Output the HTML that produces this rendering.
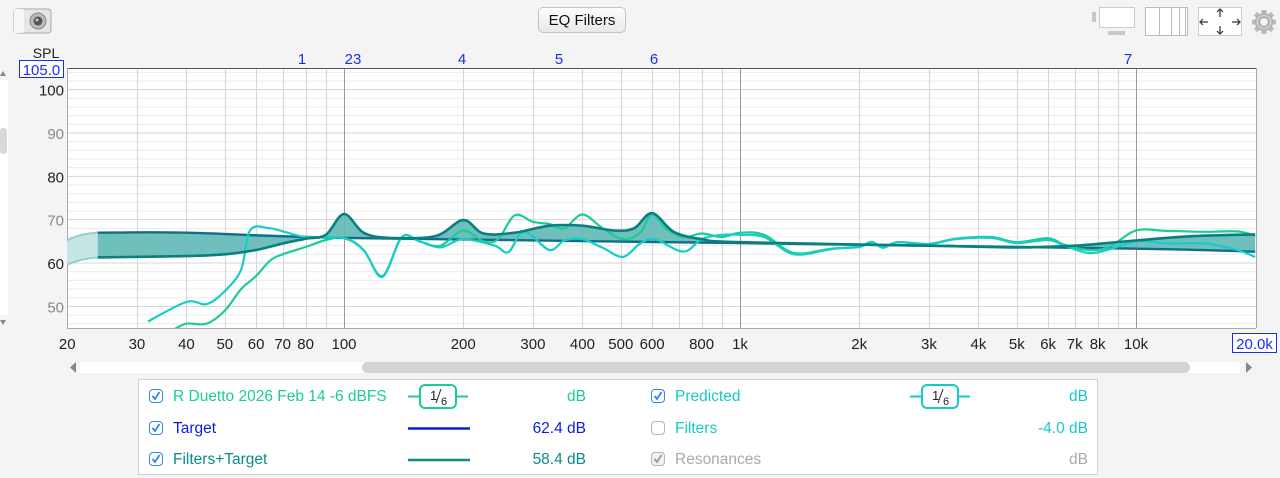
<!DOCTYPE html>
<html><head><meta charset="utf-8">
<style>
html,body{margin:0;padding:0;width:1280px;height:478px;overflow:hidden;background:#f4f4f4;font-family:"Liberation Sans",Arial,sans-serif;}
.abs{position:absolute}
.btn{left:538px;top:7px;width:88px;height:26px;border:1px solid #c4c4c4;border-radius:5px;background:linear-gradient(#fdfdfd,#e9e9e9);font-size:15px;line-height:26px;text-align:center;color:#111;box-sizing:border-box}
.legend{left:138px;top:379px;width:960px;height:96px;background:#fff;border:1px solid #d2d2d2;box-sizing:border-box}
.row{position:absolute;font-size:15.5px;line-height:18px;white-space:nowrap}
.r1{right:511px}.r2{right:9px}
.cb{position:absolute;width:14px;height:14px;border:1.5px solid #2f86f0;border-radius:4px;box-sizing:border-box;background:#fff}
.cb svg{position:absolute;left:1px;top:1px}
.cb.g{border-color:#b5b5b5}
</style></head><body>
<svg class="abs" style="left:0;top:0" width="1280" height="478" id="s">
</svg>
<div class="abs btn">EQ Filters</div>
<div class="abs legend">
 <div class="cb" style="left:10px;top:9px"><svg width="10" height="10"><path d="M1.5 5 L4 8 L8.5 1" stroke="#2f86f0" stroke-width="1.8" fill="none"/></svg></div>
 <div class="row" style="left:34px;top:8px;color:#1bcc98">R Duetto 2026 Feb 14 -6 dBFS</div>
 <div class="row r1" style="top:8px;color:#1bcc98">dB</div>
 <div class="cb" style="left:10px;top:41px"><svg width="10" height="10"><path d="M1.5 5 L4 8 L8.5 1" stroke="#2f86f0" stroke-width="1.8" fill="none"/></svg></div>
 <div class="row" style="left:34px;top:40px;color:#0c1de0">Target</div>
 <div class="row r1" style="top:40px;color:#0c1de0">62.4 dB</div>
 <div class="cb" style="left:10px;top:72px"><svg width="10" height="10"><path d="M1.5 5 L4 8 L8.5 1" stroke="#2f86f0" stroke-width="1.8" fill="none"/></svg></div>
 <div class="row" style="left:34px;top:71px;color:#0b8b86">Filters+Target</div>
 <div class="row r1" style="top:71px;color:#0b8b86">58.4 dB</div>

 <div class="cb" style="left:512px;top:9px"><svg width="10" height="10"><path d="M1.5 5 L4 8 L8.5 1" stroke="#2f86f0" stroke-width="1.8" fill="none"/></svg></div>
 <div class="row" style="left:536px;top:8px;color:#16cbc4">Predicted</div>
 <div class="row r2" style="top:8px;color:#16cbc4">dB</div>
 <div class="cb g" style="left:512px;top:41px"></div>
 <div class="row" style="left:536px;top:40px;color:#16cbc4">Filters</div>
 <div class="row r2" style="top:40px;color:#16cbc4">-4.0 dB</div>
 <div class="cb g" style="left:512px;top:72px;background:#f2f2f2"><svg width="10" height="10"><path d="M1.5 5 L4 8 L8.5 1" stroke="#999" stroke-width="1.8" fill="none"/></svg></div>
 <div class="row" style="left:536px;top:71px;color:#aaa">Resonances</div>
 <div class="row r2" style="top:71px;color:#aaa">dB</div>
</div>
<svg class="abs" style="left:0;top:0" width="1280" height="478" id="s2"></svg>
<script>
const S=document.getElementById('s');let h='';
const X=f=>344+396*Math.log10(f/100), Y=d=>68+(105-d)*4.333;
h+='<rect x="67" y="68" width="1189" height="260" fill="#fff"/>';
for(let d=46;d<=104;d+=2){const c=d%10==0?'#d4d4d4':'#ececec';h+=`<line x1="67" x2="1256" y1="${Y(d)}" y2="${Y(d)}" stroke="${c}"/>`;}
const fr=[20,30,40,50,60,70,80,90,100,200,300,400,500,600,700,800,900,1000,2000,3000,4000,5000,6000,7000,8000,9000,10000];
fr.forEach(f=>{const dec=(f==100||f==1000||f==10000);const x=Math.round(X(f))+.5;h+=`<line x1="${x}" x2="${x}" y1="68" y2="328" stroke="${dec?'#9a9a9a':'#d6d6d6'}"/>`;});
h+='<line x1="67" x2="1256" y1="68.5" y2="68.5" stroke="#555"/><line x1="67.5" x2="67.5" y1="68" y2="328" stroke="#aaa"/><line x1="1256.5" x2="1256.5" y1="68" y2="328" stroke="#aaa"/><line x1="67" x2="1256" y1="328.5" y2="328.5" stroke="#aaa"/>';
function path(pts){const p=pts.map(a=>[X(a[0]),Y(a[1])]);let s=`M${p[0][0].toFixed(1)},${p[0][1].toFixed(1)}`;for(let i=0;i<p.length-1;i++){const p0=p[i-1]||p[i],p1=p[i],p2=p[i+1],p3=p[i+2]||p2;s+=` C${(p1[0]+(p2[0]-p0[0])/6).toFixed(1)},${(p1[1]+(p2[1]-p0[1])/6).toFixed(1)} ${(p2[0]-(p3[0]-p1[0])/6).toFixed(1)},${(p2[1]-(p3[1]-p1[1])/6).toFixed(1)} ${p2[0].toFixed(1)},${p2[1].toFixed(1)}`;}return s;}
const T=[[23.9,67],[40,67],[100,65.8],[1000,64.6],[10000,63.3],[20000,62.6]];
const FT=[[23.9,61.3],[40,61.6],[50,62],[60,63],[70,64.5],[80,65.6],[90,66.5],[100,71.3],[112,67],[130,65.8],[170,66.2],[200,69.9],[225,66.8],[270,67],[330,68.6],[400,68.6],[480,67.5],[540,68],[600,71.5],[680,67.2],[800,65.5],[1000,64.8],[3000,64],[5000,63.6],[7000,64],[10000,65.2],[14000,66.2],[20000,66.6]];
h+=`<path d="M67,${Y(65.2)} Q80,${Y(66.8)} 98,${Y(67)} L98,${Y(61.3)} Q80,${Y(61)} 67,${Y(59.6)}Z" fill="#c6e6e6"/>`;
h+=`<path d="M67,${Y(65.2)} Q80,${Y(66.8)} 98,${Y(67)} M98,${Y(61.3)} Q80,${Y(61)} 67,${Y(59.6)}" stroke="#8fd0d0" stroke-width="2" fill="none"/>`;
const Tr=T.slice().reverse();
h+=`<path d="${path(FT)} L${X(20000)},${Y(62.6)} ${path(Tr).replace('M','L')}Z" fill="#5fb9b6" fill-opacity=".9"/>`;
h+=`<path d="${path(T)}" stroke="#0f6f8a" stroke-width="2.4" fill="none"/>`;
const G=[[37,44.5],[40,46],[45,46],[50,49],[55,54],[60,57],[65,60.5],[70,62],[80,63.7],[90,65.3],[100,65.8],[112,63],[125,57],[140,66],[155,65],[175,64],[200,67.5],[225,65],[245,65.5],[270,71],[300,69.5],[330,69],[360,68],[400,71.2],[450,68],[506,65.5],[560,67],[600,71.3],[650,68],[720,66],[800,66.8],[900,66],[1000,67],[1150,66.5],[1370,62.3],[1700,63.3],[2000,63.7],[2150,64.8],[2300,63.5],[2500,64.8],[3000,64.4],[3500,65.6],[4300,66],[5000,64.8],[6000,65.7],[6600,64.2],[7600,63],[8600,63.8],[10000,67.5],[12000,67.4],[15000,67.2],[18000,67.3],[20000,66.3]];
const P=[[32,46.5],[40,51],[45,50.5],[50,53.5],[55,58.5],[58,67.6],[65,68],[72,67],[80,66],[100,65.7],[112,63],[125,56.8],[140,66],[155,65],[175,63.6],[200,65.5],[240,64],[260,62.5],[285,67.2],[330,63],[360,65.2],[400,65.5],[450,63.5],[506,61.4],[560,64.5],[610,65.5],[719,62.6],[800,65.5],[900,66.5],[1000,66.5],[1150,66],[1370,62],[1700,63.2],[2000,63.8],[2150,64.9],[2300,63.6],[2500,64.8],[3000,64.3],[3500,65.5],[4300,65.8],[5000,64.6],[6000,65.3],[6600,64],[7600,62.3],[8600,63.2],[10000,65],[12000,64.5],[15000,64.5],[18000,63],[20000,61.4]];
h+='<clipPath id="c"><rect x="67" y="68" width="1189" height="260"/></clipPath>';
h+=`<g clip-path="url(#c)"><path d="${path(G)}" stroke="#19cc98" stroke-width="2.2" fill="none"/><path d="${path(P)}" stroke="#18cdc6" stroke-width="2.2" fill="none"/><path d="${path(FT)}" stroke="#0a7f80" stroke-width="2.6" fill="none"/></g>`;
[[100,'#222'],[90,'#888'],[80,'#222'],[70,'#888'],[60,'#222'],[50,'#888']].forEach(a=>{h+=`<text x="64" y="${Y(a[0])+6}" font-size="15" text-anchor="end" fill="${a[1]}">${a[0]}</text>`;});
h+='<text x="46" y="58" font-size="14" text-anchor="middle" fill="#222">SPL</text>';
h+='<rect x="19.5" y="60.5" width="44" height="17" fill="#fff" stroke="#1a2ef0"/><text x="41.5" y="75" font-size="15" text-anchor="middle" fill="#1a2ef0">105.0</text>';
[[20,'20'],[30,'30'],[40,'40'],[50,'50'],[60,'60'],[70,'70'],[80,'80'],[100,'100'],[200,'200'],[300,'300'],[400,'400'],[500,'500'],[600,'600'],[800,'800'],[1000,'1k'],[2000,'2k'],[3000,'3k'],[4000,'4k'],[5000,'5k'],[6000,'6k'],[7000,'7k'],[8000,'8k'],[10000,'10k']].forEach(a=>{h+=`<text x="${X(a[0])}" y="349" font-size="15" text-anchor="middle" fill="#222">${a[1]}</text>`;});
h+='<rect x="1232.5" y="333.5" width="44" height="19" fill="#fff" stroke="#1a2ef0"/><text x="1254.5" y="349" font-size="15" text-anchor="middle" fill="#1a2ef0">20.0k</text>';
[[302,'1'],[353,'23'],[462,'4'],[559,'5'],[654,'6'],[1128,'7']].forEach(a=>{h+=`<text x="${a[0]}" y="64" font-size="15" text-anchor="middle" fill="#1a2ef0">${a[1]}</text>`;});
h+='<rect x="80" y="362" width="1160" height="11" fill="#fff"/><rect x="362" y="362" width="828" height="11" rx="5.5" fill="#d4d4d4"/>';
h+='<path d="M76,362 L70,367.5 L76,373Z" fill="#888"/><path d="M1246,362 L1252,367.5 L1246,373Z" fill="#888"/>';
h+='<rect x="0" y="80" width="8" height="235" fill="#fff"/><rect x="0" y="128" width="7" height="26" rx="3" fill="#d8d8d8"/>';
h+='<path d="M0,76 L3,71 L6,76Z" fill="#888"/><path d="M0,320 L3,325 L6,320Z" fill="#888"/>';
h+='<rect x="14" y="9" width="37" height="24" rx="3" fill="#e6e6e6" stroke="#aaa"/><rect x="14" y="9" width="10" height="24" rx="2" fill="#f6f6f6"/><circle cx="38" cy="21" r="8" fill="#bbb" stroke="#888"/><circle cx="38" cy="21" r="4.5" fill="#555"/><circle cx="37" cy="20" r="1.5" fill="#ccc"/>';
h+='<rect x="1092" y="12" width="4" height="10" fill="#c8c8c8"/><rect x="1099.5" y="7.5" width="35" height="20" fill="#fff" stroke="#ccc"/><rect x="1108" y="31" width="17" height="4" fill="#c8c8c8"/>';
h+='<rect x="1145.5" y="7.5" width="42" height="28" fill="#fff" stroke="#bbb"/>';
[1160,1172,1180,1186].forEach(x=>{h+=`<line x1="${x-.5}" x2="${x-.5}" y1="7" y2="35" stroke="#bbb"/>`;});
h+='<rect x="1198.5" y="7.5" width="43" height="28" fill="#fff" stroke="#ccc"/>';
h+='<g stroke="#333" stroke-width="1.2" fill="none"><path d="M1220,9 v8 M1217,12 l3,-3 3,3"/><path d="M1220,26 v8 M1217,31 l3,3 3,-3"/><path d="M1200,22 h8 M1203,19 l-3,3 3,3"/><path d="M1232,22 h8 M1237,19 l3,3 -3,3"/></g>';
let g='';for(let i=0;i<8;i++){g+=`<rect x="-2.5" y="-12" width="5" height="6" fill="#bbb" transform="rotate(${i*45})"/>`;}
h+=`<g transform="translate(1264,22)">${g}<circle r="8.5" fill="#c8c8c8" stroke="#aaa"/><circle r="4.5" fill="#f4f4f4" stroke="#999"/></g>`;
S.innerHTML=h;
let h2='';
function frac(x,c){return `<line x1="${x-12}" x2="${x+48}" y1="396.5" y2="396.5" stroke="${c}" stroke-width="2"/><rect x="${x}" y="385" width="36" height="23" rx="5" fill="#fff" stroke="${c}" stroke-width="2"/><text x="${x+10}" y="400" font-size="13" fill="#222">1</text><line x1="${x+16}" x2="${x+21}" y1="403" y2="389" stroke="#222"/><text x="${x+21}" y="405" font-size="11" fill="#222">6</text>`;}
h2+=frac(420,'#1bcc98')+frac(922,'#16cbc4');
h2+='<line x1="408" x2="470" y1="428.5" y2="428.5" stroke="#0c1de0" stroke-width="2.5"/><line x1="408" x2="470" y1="460" y2="460" stroke="#0b8b86" stroke-width="2.5"/>';
document.getElementById('s2').innerHTML=h2;
</script>
</body></html>
